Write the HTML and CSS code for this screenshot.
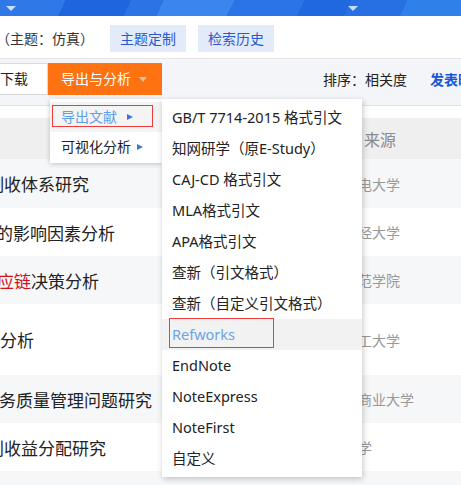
FILE: index.html
```html
<!DOCTYPE html>
<html lang="zh-CN">
<head>
<meta charset="utf-8">
<title>导出与分析</title>
<link rel="stylesheet" href="styles.css">
</head>
<body>
<div class="topbar">
  <span class="tri"></span>
  <span class="tri tri-2"></span>
</div>

<div class="themebar">
  <span class="theme-label">（主题：仿真）</span>
  <span class="chip">主题定制</span>
  <span class="chip">检索历史</span>
</div>

<div class="toolbar">
  <span class="btn btn-plain">批量下载</span>
  <span class="btn btn-orange">导出与分析<span class="caret"></span></span>
  <span class="sort">排序：相关度</span>
  <span class="sort-link">发表时间</span>
</div>

<div class="table">
  <div class="row head">
    <div class="c-title"></div>
    <div class="c-src"><span class="head-src">来源</span></div>
  </div>
  <div class="row alt">
    <div class="c-title"><span class="t t-1">制收体系研究</span></div>
    <div class="c-src">邮电大学</div>
  </div>
  <div class="row">
    <div class="c-title"><span class="t t-2">的影响因素分析</span></div>
    <div class="c-src">财经大学</div>
  </div>
  <div class="row alt">
    <div class="c-title"><span class="t t-3"><span class="hl">应链</span>决策分析</span></div>
    <div class="c-src">师范学院</div>
  </div>
  <div class="row tall">
    <div class="c-title"><span class="t t-4">分析</span></div>
    <div class="c-src">理工大学</div>
  </div>
  <div class="row alt">
    <div class="c-title"><span class="t t-5">务质量管理问题研究</span></div>
    <div class="c-src">工商业大学</div>
  </div>
  <div class="row">
    <div class="c-title"><span class="t t-1">利收益分配研究</span></div>
    <div class="c-src">大学</div>
  </div>
  <div class="row alt"></div>
</div>

<div class="menu">
  <div class="m-item active">导出文献<span class="arrow arrow-wide"></span><span class="mark mark-1"></span></div>
  <div class="m-item">可视化分析<span class="arrow"></span></div>
</div>

<div class="submenu">
  <div class="s-item">GB/T 7714-2015 格式引文</div>
  <div class="s-item">知网研学（原E-Study）</div>
  <div class="s-item">CAJ-CD 格式引文</div>
  <div class="s-item">MLA格式引文</div>
  <div class="s-item">APA格式引文</div>
  <div class="s-item">查新（引文格式）</div>
  <div class="s-item">查新（自定义引文格式）</div>
  <div class="s-item active">Refworks<span class="mark mark-2"></span></div>
  <div class="s-item">EndNote</div>
  <div class="s-item">NoteExpress</div>
  <div class="s-item">NoteFirst</div>
  <div class="s-item">自定义</div>
</div>
</body>
</html>
```

FILE: styles.css
```css
* { box-sizing: border-box; margin: 0; padding: 0; }

body {
  width: 461px;
  height: 485px;
  overflow: hidden;
  position: relative;
  background: #fff;
  color: #333;
  font-family: "Noto Sans", "Noto Sans CJK SC", sans-serif;
  font-size: 14px;
}

.topbar {
  height: 16px;
  display: flex;
  align-items: center;
  padding-left: 6px;
  background: linear-gradient(115deg,
    #2e78e8 0 14%, #1f66de 14% 28%, #2c74e6 28% 35%, #3a86ee 35% 50%,
    #2b74e7 50% 65%, #1f68df 65% 75%, #2670e4 75% 87%, #3080ea 87% 100%);
}
.tri {
  width: 0;
  height: 0;
  border-left: 5px solid transparent;
  border-right: 5px solid transparent;
  border-top: 5px solid rgba(255, 255, 255, 0.75);
}
.tri-2 { margin-left: 332px; }

.themebar {
  height: 43px;
  display: flex;
  align-items: center;
  padding-top: 3px;
  border-bottom: 1px solid #e6e6e6;
  white-space: nowrap;
}
.theme-label {
  margin-left: -4px;
  margin-right: 16px;
  color: #333;
  line-height: 20px;
}
.chip {
  height: 27px;
  line-height: 27px;
  padding: 0 10px;
  margin-right: 12px;
  background: #e3ebfb;
  color: #2b58cf;
}

.toolbar {
  height: 47px;
  display: flex;
  align-items: center;
  padding-bottom: 7px;
  padding-top: 1px;
  background: #f3f5f8;
  border-bottom: 1px solid #e0e3e8;
  white-space: nowrap;
}
.btn {
  flex-shrink: 0;
  height: 32px;
  line-height: 30px;
  display: flex;
  align-items: center;
}
.btn-plain {
  margin-left: -48px;
  padding: 0 19px;
  background: #fff;
  border: 1px solid #d9d9d9;
  color: #222;
}
.btn-orange {
  width: 114px;
  padding-left: 13px;
  background: #ff7212;
  color: #fff;
}
.caret {
  margin-left: 8px;
  width: 0;
  height: 0;
  border-left: 4.5px solid transparent;
  border-right: 4.5px solid transparent;
  border-top: 5px solid #cfc3ba;
}
.sort {
  flex-shrink: 0;
  margin-left: 161px;
  color: #222;
}
.sort-link {
  flex-shrink: 0;
  margin-left: 23px;
  color: #1a56d8;
  font-weight: bold;
}

.table { margin-top: 12px; }
.row {
  height: 48px;
  display: flex;
  align-items: center;
  white-space: nowrap;
}
.row.head { height: 41px; background: #efefef; }
.row.alt { background: #f6f7f9; }
.row:nth-child(2) { height: 49px; }
.row.tall { height: 71px; }
.c-title {
  width: 344px;
  flex-shrink: 0;
  overflow: hidden;
  font-size: 17px;
  color: #222;
}
.t { display: block; }
.t-1 { margin-left: -13px; }
.t-2 { margin-left: -4px; }
.t-3 { margin-left: -3px; }
.t-4 { margin-left: 0; }
.t-5 { margin-left: -1px; }
.hl { color: #d0101a; }
.c-src {
  flex-shrink: 0;
  color: #999;
  font-size: 14px;
}
.head-src {
  margin-left: 20px;
  font-size: 16px;
  color: #8a8a8a;
}

.menu {
  position: absolute;
  left: 50px;
  top: 99px;
  width: 112px;
  height: 64px;
  padding-top: 3px;
  background: #fff;
  box-shadow: 0 1px 5px rgba(0, 0, 0, 0.22);
  white-space: nowrap;
}
.m-item {
  position: relative;
  height: 30px;
  line-height: 30px;
  padding-left: 11px;
  display: flex;
  align-items: center;
  color: #222;
}
.m-item.active { background: #f4f4f4; color: #5f9fe8; }
.arrow {
  margin-left: 6px;
  width: 0;
  height: 0;
  border-left: 6px solid #3a78d8;
  border-top: 3.5px solid transparent;
  border-bottom: 3.5px solid transparent;
}
.arrow-wide { margin-left: 10px; }

.submenu {
  position: absolute;
  left: 162px;
  top: 99px;
  width: 200px;
  height: 378px;
  padding-top: 3px;
  background: #fff;
  box-shadow: 1px 2px 6px rgba(0, 0, 0, 0.22);
  white-space: nowrap;
  font-size: 14.5px;
}
.s-item {
  position: relative;
  height: 31px;
  line-height: 31px;
  padding-left: 10px;
  color: #222;
}
.s-item.active { background: #f2f2f2; color: #6aa5e8; }

.mark {
  position: absolute;
  border: 1px solid #ee3b3b;
}
.mark-1 { left: 2px; top: 3px; width: 101px; height: 22px; }
.mark-2 { left: 7px; top: -1px; width: 105px; height: 30px; }
```
